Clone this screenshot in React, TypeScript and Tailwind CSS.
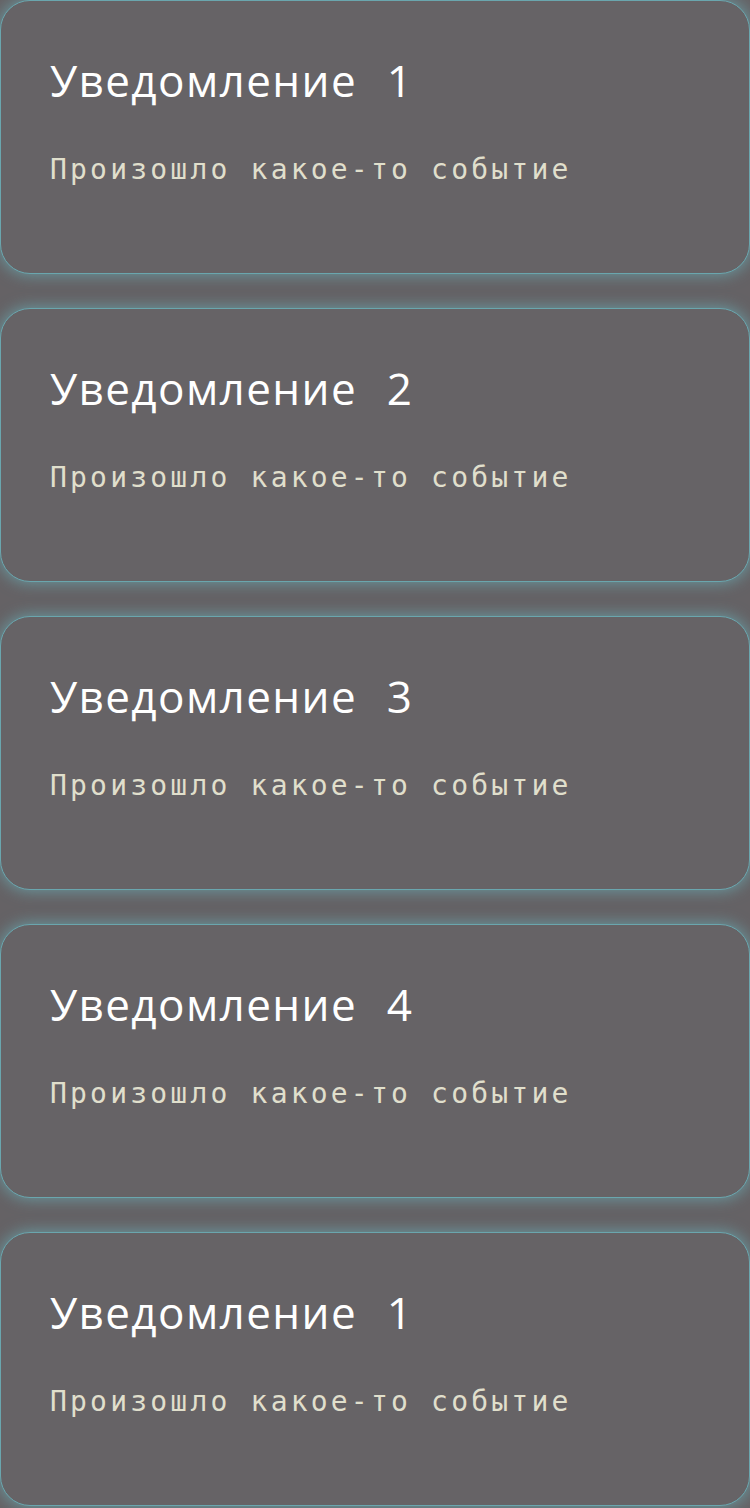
const notifications = [
  { id: 1, title: "Уведомление 1" },
  { id: 2, title: "Уведомление 2" },
  { id: 3, title: "Уведомление 3" },
  { id: 4, title: "Уведомление 4" },
  { id: 5, title: "Уведомление 1" },
];

export default function App() {
  return (
    <div className="min-h-screen bg-[#656265] flex flex-col gap-[34px]">
      {notifications.map((n) => (
        <NotificationCard key={n.id} title={n.title} text="Произошло какое-то событие" />
      ))}
    </div>
  );
}

function NotificationCard({ title, text }: { title: string; text: string }) {
  return (
    <div className="h-[274px] rounded-[30px] border border-[#6aa6ae] bg-[#666366] shadow-[0_0_16px_rgba(106,166,174,0.9)] pl-[49px] pt-[49px] flex flex-col">
      <h2 className="text-[44px] leading-[60px] tracking-[1.4px] [word-spacing:17px] text-white font-['Open_Sans',sans-serif] font-normal">
        {title}
      </h2>
      <p className="mt-[43px] text-[28px] leading-[33px] tracking-[3.2px] text-[#e0dfcc] font-['DejaVu_Sans_Mono',monospace]">
        {text}
      </p>
    </div>
  );
}
